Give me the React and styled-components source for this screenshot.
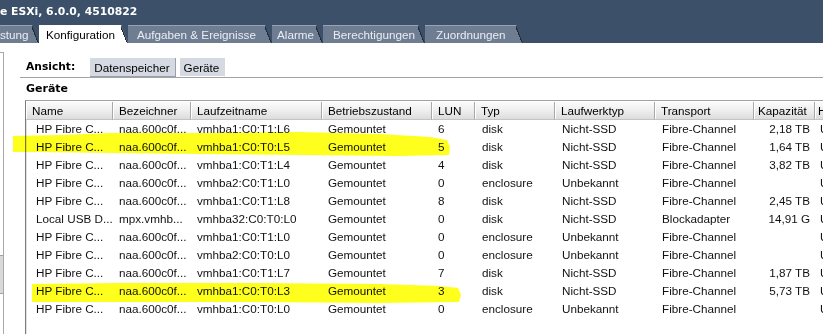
import React from 'react';
import styled, { createGlobalStyle } from 'styled-components';

const GlobalStyle = createGlobalStyle`
  html, body {
    margin: 0;
    padding: 0;
    background: #fff;
    overflow: hidden;
  }
  body {
    font-family: "Liberation Sans", Arial, sans-serif;
    font-size: 11.7px;
    color: #000;
  }
`;

const tabs = [
  { label: 'stung', w: 39, pad: 0 },
  { label: 'Konfiguration', w: 89, pad: 7, active: true },
  { label: 'Aufgaben & Ereignisse', w: 144, pad: 9 },
  { label: 'Alarme', w: 51, pad: 5 },
  { label: 'Berechtigungen', w: 102, pad: 10 },
  { label: 'Zuordnungen', w: 98, pad: 11 },
];

const columns = [
  { key: 'name', label: 'Name', w: 87, pad: 10 },
  { key: 'id', label: 'Bezeichner', w: 78 },
  { key: 'runtime', label: 'Laufzeitname', w: 131 },
  { key: 'state', label: 'Betriebszustand', w: 110 },
  { key: 'lun', label: 'LUN', w: 43 },
  { key: 'type', label: 'Typ', w: 80, pad: 7 },
  { key: 'drive', label: 'Laufwerktyp', w: 100, pad: 7 },
  { key: 'transport', label: 'Transport', w: 99, pad: 7 },
  { key: 'capacity', label: 'Kapazität', w: 61, right: true, headPad: 4 },
  { key: 'owner', label: 'Hardwarebeschleunigung', w: 160, pad: 5, headPad: 3 },
];

const gridCols = columns.map((c) => `${c.w}px`).join(' ');

const hp = (runtime, lun, type, drive, capacity) => ({
  name: 'HP Fibre C...',
  id: 'naa.600c0f...',
  runtime,
  state: 'Gemountet',
  lun,
  type,
  drive,
  transport: 'Fibre-Channel',
  capacity,
  owner: 'Unterstützt',
});

const devices = [
  hp('vmhba1:C0:T1:L6', '6', 'disk', 'Nicht-SSD', '2,18 TB'),
  hp('vmhba1:C0:T0:L5', '5', 'disk', 'Nicht-SSD', '1,64 TB'),
  hp('vmhba1:C0:T1:L4', '4', 'disk', 'Nicht-SSD', '3,82 TB'),
  hp('vmhba2:C0:T1:L0', '0', 'enclosure', 'Unbekannt', ''),
  hp('vmhba1:C0:T1:L8', '8', 'disk', 'Nicht-SSD', '2,45 TB'),
  {
    name: 'Local USB D...',
    id: 'mpx.vmhb...',
    runtime: 'vmhba32:C0:T0:L0',
    state: 'Gemountet',
    lun: '0',
    type: 'disk',
    drive: 'Nicht-SSD',
    transport: 'Blockadapter',
    capacity: '14,91 G',
    owner: 'Unbekannt',
  },
  hp('vmhba1:C0:T1:L0', '0', 'enclosure', 'Unbekannt', ''),
  hp('vmhba2:C0:T0:L0', '0', 'enclosure', 'Unbekannt', ''),
  hp('vmhba1:C0:T1:L7', '7', 'disk', 'Nicht-SSD', '1,87 TB'),
  hp('vmhba1:C0:T0:L3', '3', 'disk', 'Nicht-SSD', '5,73 TB'),
  hp('vmhba1:C0:T0:L0', '0', 'enclosure', 'Unbekannt', ''),
];

const App = () => (
  <>
    <GlobalStyle />
    <Screen>
      <TopBand>
        <Title>e ESXi, 6.0.0, 4510822</Title>
        <TabStrip>
          {tabs.map((t) => (
            <Tab key={t.label} $w={t.w} $pad={t.pad} $active={t.active}>
              {t.label}
            </Tab>
          ))}
        </TabStrip>
      </TopBand>
      <Body>
        <LeftStrip>
          <StripSpacer />
          <StripBlock />
        </LeftStrip>
        <Main>
          <Toolbar>
            <ToolLabel>Ansicht:</ToolLabel>
            <ViewButton $raised>Datenspeicher</ViewButton>
            <ViewButton>Geräte</ViewButton>
          </Toolbar>
          <Heading>Geräte</Heading>
          <Table>
            <HeaderRow>
              {columns.map((c) => (
                <HeadCell key={c.key} $pad={c.headPad}>
                  {c.label}
                </HeadCell>
              ))}
            </HeaderRow>
            {devices.map((d, i) => (
              <Row key={i}>
                {columns.map((c) => (
                  <Cell key={c.key} $pad={c.pad} $right={c.right}>
                    {d[c.key]}
                  </Cell>
                ))}
              </Row>
            ))}
          </Table>
        </Main>
      </Body>
      <Marker viewBox="0 0 823 334" width="823" height="334">
        <path d="M13,136 L60,135 L110,133 L200,133 L300,132 L380,134 L430,137 L447,140 L450,147 L449,155 L400,156 L300,155 L200,154 L110,153 L40,152 L13,152 Z" />
        <path d="M32,284 L120,283 L250,283 L380,284 L440,286 L458,288 L461,295 L459,302 L380,303 L250,302 L120,302 L32,302 Z" />
      </Marker>
    </Screen>
  </>
);

const Screen = styled.div`
  position: relative;
  width: 823px;
  height: 334px;
  overflow: hidden;
  display: flex;
  flex-direction: column;
`;

const TopBand = styled.div`
  flex-shrink: 0;
  height: 43px;
  background: #3c5069;
  display: flex;
  flex-direction: column;
  justify-content: space-between;
`;

const Title = styled.div`
  padding-top: 5px;
  color: #fff;
  font-family: "DejaVu Sans", sans-serif;
  font-weight: bold;
  font-size: 10.8px;
  line-height: 14px;
  white-space: nowrap;
`;

const TabStrip = styled.div`
  display: flex;
  height: 18px;
`;

const Tab = styled.div`
  position: relative;
  box-sizing: border-box;
  width: ${(p) => p.$w}px;
  height: 18px;
  padding-left: ${(p) => p.$pad}px;
  line-height: 17px;
  white-space: nowrap;
  overflow: hidden;
  background: ${(p) => (p.$active ? '#fff' : '#6f7d93')};
  color: ${(p) => (p.$active ? '#000' : '#e9edf2')};
  border-top: 1px solid ${(p) => (p.$active ? '#fff' : '#97a3b4')};
  clip-path: polygon(0 0, calc(100% - 7px) 0, 100% 100%, 0 100%);

  &::after {
    content: '';
    position: absolute;
    top: -1px;
    right: 0;
    width: 7px;
    height: 18px;
    background: linear-gradient(
      to top right,
      transparent calc(50% - 1.2px),
      #1f2a37 calc(50% - 1.2px),
      #1f2a37 calc(50% + 0.6px),
      transparent calc(50% + 0.6px)
    );
  }
`;

const Body = styled.div`
  flex: 1;
  display: flex;
  min-height: 0;
`;

const LeftStrip = styled.div`
  width: 3px;
  margin-top: 9px;
  border-top: 1px solid #a9a9a9;
  border-right: 1px solid #a9a9a9;
  display: flex;
  flex-direction: column;
`;

const StripSpacer = styled.div`
  height: 202px;
`;

const StripBlock = styled.div`
  height: 37px;
  background: #d9d9d9;
  border-top: 1px solid #a0a0a0;
  border-bottom: 1px solid #a0a0a0;
`;

const Main = styled.div`
  flex: 1;
  min-width: 0;
  margin-left: 16px;
  display: flex;
  flex-direction: column;
`;

const Toolbar = styled.div`
  display: flex;
  align-items: flex-end;
  height: 34px;
  padding-left: 6px;
  border-bottom: 1px solid #a3a3a3;
`;

const ToolLabel = styled.span`
  margin-bottom: 3px;
  font-family: "DejaVu Sans", sans-serif;
  font-weight: bold;
  font-size: 10.7px;
  line-height: 14px;
`;

const ViewButton = styled.span`
  box-sizing: border-box;
  height: 19px;
  margin-left: ${(p) => (p.$raised ? 15 : 4)}px;
  padding: 0 5px 0 4px;
  line-height: 19px;
  background: #d5dae2;
  border-right: 1px solid ${(p) => (p.$raised ? '#9aa0aa' : '#d5dae2')};
  border-bottom: 1px solid ${(p) => (p.$raised ? '#9aa0aa' : '#fff')};
`;

const Heading = styled.div`
  height: 22px;
  padding-left: 6px;
  line-height: 22px;
  font-family: "DejaVu Sans", sans-serif;
  font-weight: bold;
  font-size: 11px;
`;

const Table = styled.div`
  flex: 1;
  margin-left: 5px;
  width: max-content;
  background: #fff;
  border-top: 1px solid #a3a3a3;
  border-left: 1px solid #7b7b7b;
  box-shadow: inset 1px 1px 0 #e2e2e2;
`;

const HeaderRow = styled.div`
  display: grid;
  grid-template-columns: ${gridCols};
  height: 19px;
  box-sizing: border-box;
  border-top: 1px solid #fff;
`;

const HeadCell = styled.div`
  box-sizing: border-box;
  padding-left: ${(p) => p.$pad ?? 6}px;
  line-height: 17px;
  white-space: nowrap;
  overflow: hidden;
  background: linear-gradient(#fbfbfb, #f0f0f0 45%, #dcdcdc);
  border-right: 1px solid #a8a8a8;
  border-bottom: 1px solid #c4c4c4;
  box-shadow: inset 1px 0 0 #fff;
`;

const Row = styled.div`
  display: grid;
  grid-template-columns: ${gridCols};
  height: 18px;
`;

const Cell = styled.div`
  box-sizing: border-box;
  padding-left: ${(p) => (p.$right ? 0 : p.$pad ?? 6)}px;
  padding-right: ${(p) => (p.$right ? 5 : 0)}px;
  text-align: ${(p) => (p.$right ? 'right' : 'left')};
  line-height: 18px;
  white-space: nowrap;
  overflow: hidden;
  color: #111;
`;

const Marker = styled.svg`
  position: absolute;
  top: 0;
  left: 0;
  pointer-events: none;
  mix-blend-mode: multiply;
  fill: #ffff1e;
`;

export default App;
